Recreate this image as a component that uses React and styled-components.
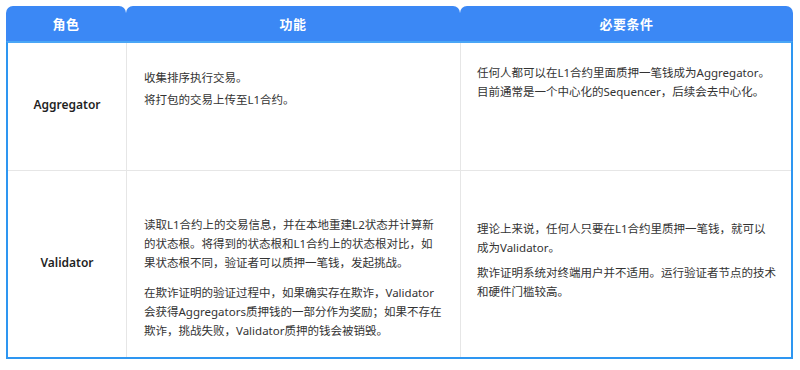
import React from 'react';
import styled, { createGlobalStyle } from 'styled-components';

const GlobalStyle = createGlobalStyle`
  html, body {
    margin: 0;
    padding: 0;
    background: #ffffff;
  }
  body {
    font-family: 'Noto Sans', 'Noto Sans CJK SC', sans-serif;
  }
`;

const Page = styled.div`
  width: 800px;
  height: 370px;
  padding: 6px 0 0 6px;
  box-sizing: border-box;
`;

const Table = styled.div`
  width: 787px;
`;

const HeaderRow = styled.div`
  display: grid;
  grid-template-columns: 120px 334px 1fr;
  height: 35px;
`;

const HeaderCell = styled.div`
  display: flex;
  align-items: center;
  justify-content: center;
  background: #3b88f5;
  border-radius: 7px 7px 0 0;
  color: #ffffff;
  font-family: 'Noto Sans CJK SC', sans-serif;
  font-size: 13px;
  font-weight: 700;
  letter-spacing: 0.5px;
`;

const Body = styled.div`
  border: 2px solid #2e96f1;
  border-top-color: #4aa6f6;
  display: grid;
  grid-template-columns: 118px 334px 1fr;
`;

const Cell = styled.div`
  border-left: ${({ $first }) => ($first ? 'none' : '1px solid #e6e6e6')};
  border-bottom: ${({ $last }) => ($last ? 'none' : '1px solid #e6e6e6')};
  height: ${({ $height }) => $height}px;
  padding: ${({ $top }) => $top || 0}px ${({ $right }) => $right || 0}px 0
    ${({ $left }) => $left || 0}px;
  box-sizing: border-box;
`;

const RoleCell = styled(Cell)`
  display: flex;
  align-items: center;
  justify-content: center;
  padding: 0 0 4px;
  font-family: 'Noto Sans', 'Noto Sans CJK SC', sans-serif;
  font-size: 12px;
  font-weight: 600;
  color: #1f1f1f;
`;

const Para = styled.p`
  margin: 0 0 ${({ $gap }) => $gap || 0}px;
  font-family: 'Noto Sans', 'Noto Sans CJK SC', sans-serif;
  font-size: 11.5px;
  line-height: 19px;
  color: #333333;
  white-space: pre-line;
`;

const rows = [
  {
    role: 'Aggregator',
    height: 128,
    duties: {
      top: 25,
      gap: 3,
      paras: ['收集排序执行交易。', '将打包的交易上传至L1合约。'],
    },
    needs: {
      top: 20,
      gap: 0,
      paras: [
        '任何人都可以在L1合约里面质押一笔钱成为Aggregator。',
        '目前通常是一个中心化的Sequencer，后续会去中心化。',
      ],
    },
  },
  {
    role: 'Validator',
    height: 186,
    duties: {
      top: 44,
      gap: 11,
      paras: [
        '读取L1合约上的交易信息，并在本地重建L2状态并计算新的状态根。将得到的状态根和L1合约上的状态根对比，如果状态根不同，验证者可以质押一笔钱，发起挑战。',
        '在欺诈证明的验证过程中，如果确实存在欺诈，Validator会获得Aggregators质押钱的一部分作为奖励；如果不存在欺诈，挑战失败，Validator质押的钱会被销毁。',
      ],
    },
    needs: {
      top: 48,
      gap: 6,
      paras: [
        '理论上来说，任何人只要在L1合约里质押一笔钱，就可以\n成为Validator。',
        '欺诈证明系统对终端用户并不适用。运行验证者节点的技术和硬件门槛较高。',
      ],
    },
  },
];

export default function App() {
  return (
    <>
      <GlobalStyle />
      <Page>
        <Table>
          <HeaderRow>
            <HeaderCell>角色</HeaderCell>
            <HeaderCell>功能</HeaderCell>
            <HeaderCell>必要条件</HeaderCell>
          </HeaderRow>
          <Body>
            {rows.map((row, i) => {
              const last = i === rows.length - 1;
              return (
                <React.Fragment key={row.role}>
                  <RoleCell $first $last={last} $height={row.height}>
                    {row.role}
                  </RoleCell>
                  <Cell
                    $last={last}
                    $height={row.height}
                    $top={row.duties.top}
                    $left={17}
                    $right={17}
                  >
                    {row.duties.paras.map(p => (
                      <Para key={p} $gap={row.duties.gap}>
                        {p}
                      </Para>
                    ))}
                  </Cell>
                  <Cell
                    $last={last}
                    $height={row.height}
                    $top={row.needs.top}
                    $left={16}
                    $right={10}
                  >
                    {row.needs.paras.map(p => (
                      <Para key={p} $gap={row.needs.gap}>
                        {p}
                      </Para>
                    ))}
                  </Cell>
                </React.Fragment>
              );
            })}
          </Body>
        </Table>
      </Page>
    </>
  );
}
